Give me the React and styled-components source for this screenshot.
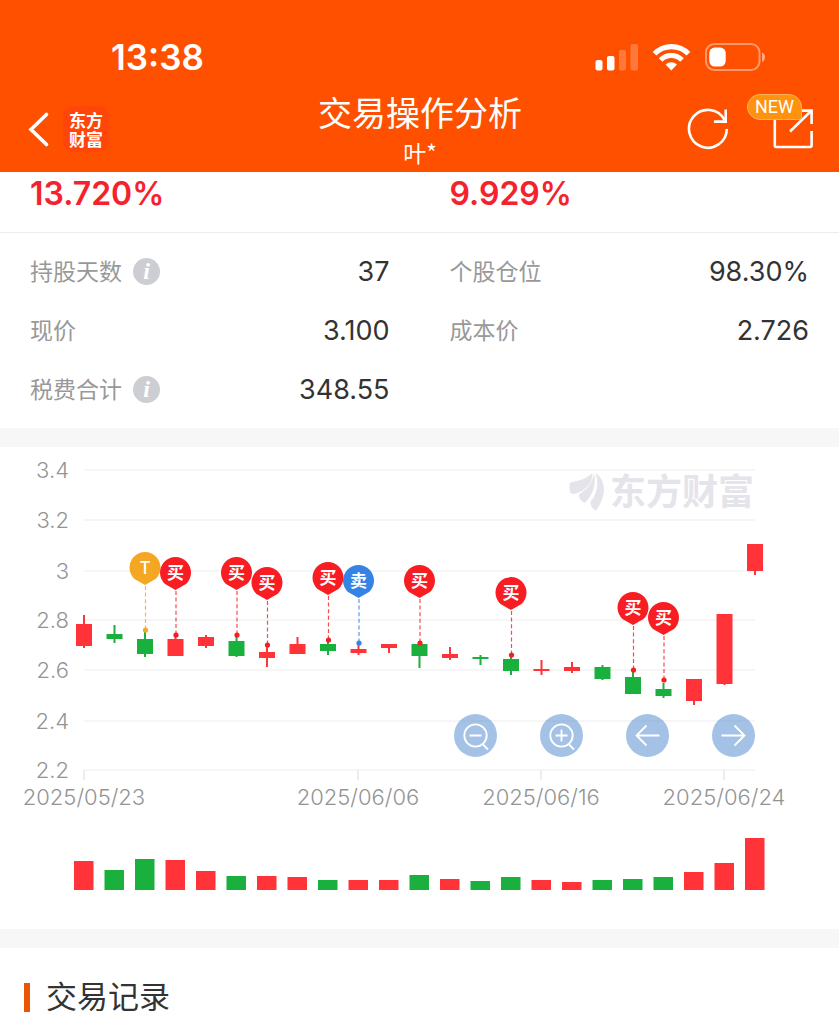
import styled, { createGlobalStyle } from "styled-components";

const RED = "#ff3338";
const GREEN = "#1ab03e";

const xAt = (i) => 84 + i * 30.5;

// [color, body top, body bottom, wick top, wick bottom]
const candles = [
  [RED, 624, 646, 615, 648],
  [GREEN, 634, 639, 625, 643],
  [GREEN, 639, 654, 632, 657],
  [RED, 639, 656, 636, 656],
  [RED, 637, 646, 635, 648],
  [GREEN, 641, 656, 637, 657],
  [RED, 652, 658, 645, 667],
  [RED, 644, 654, 637, 654],
  [GREEN, 644, 651, 642, 655],
  [RED, 649, 653, 645, 655],
  [RED, 644, 648, 644, 653],
  [GREEN, 644, 656, 642, 668],
  [RED, 654, 658, 647, 660],
  [GREEN, 657, 659, 655, 665],
  [GREEN, 659, 671, 656, 675],
  [RED, 669, 671, 660, 675],
  [RED, 667, 671, 662, 673],
  [GREEN, 667, 679, 665, 680],
  [GREEN, 677, 694, 672, 694],
  [GREEN, 689, 696, 683, 698],
  [RED, 679, 701, 679, 705],
  [RED, 614, 684, 614, 685],
  [RED, 544, 571, 544, 575],
];

const volumes = [
  29, 20, 31, 30, 19, 14, 14, 13, 10, 10, 10, 15, 11, 9, 13, 10, 8, 10, 11, 13,
  18, 27, 52,
];

const pins = [
  { i: 2, y: 630, type: "T" },
  { i: 3, y: 635, type: "买" },
  { i: 5, y: 635, type: "买" },
  { i: 6, y: 645, type: "买" },
  { i: 8, y: 640, type: "买" },
  { i: 9, y: 643, type: "卖" },
  { i: 11, y: 643, type: "买" },
  { i: 14, y: 655, type: "买" },
  { i: 18, y: 670, type: "买" },
  { i: 19, y: 680, type: "买" },
];

const pinColors = { T: "#f5a623", 买: "#f81d22", 卖: "#3583e4" };

const yTicks = [
  ["3.4", 470],
  ["3.2", 520],
  ["3", 571],
  ["2.8", 620],
  ["2.6", 670],
  ["2.4", 721],
  ["2.2", 770],
];

const xTicks = [
  ["2025/05/23", 84],
  ["2025/06/06", 358],
  ["2025/06/16", 541],
  ["2025/06/24", 724],
];

const details = [
  { label: "持股天数", value: "37", info: true },
  { label: "个股仓位", value: "98.30%" },
  { label: "现价", value: "3.100" },
  { label: "成本价", value: "2.726" },
  { label: "税费合计", value: "348.55", info: true },
];

const StatusIcons = () => (
  <svg width="170" height="28" viewBox="595 42 170 28" fill="#fff">
    <rect x="595.5" y="59" width="7" height="10.5" rx="2" />
    <rect x="607" y="55" width="7.5" height="14.5" rx="2" />
    <rect x="619" y="49" width="7" height="20.5" rx="2" opacity="0.24" />
    <rect x="630.5" y="43" width="7.5" height="26.5" rx="2" opacity="0.24" />
    <g fill="none" stroke="#fff" strokeWidth="5.2">
      <path d="M654.6 52.8 A23.4 23.4 0 0 1 688.4 52.8" />
      <path d="M660.6 59 A15 15 0 0 1 682 59" />
    </g>
    <path d="M665.6 63.6 A8.4 8.4 0 0 1 677 63.6 L671.3 69.6 Z" />
    <rect
      x="706"
      y="43"
      width="53.5"
      height="26"
      rx="8.5"
      fill="none"
      stroke="#fff"
      strokeWidth="2"
      opacity="0.42"
    />
    <rect x="709.3" y="46.6" width="16.4" height="19" rx="5.5" />
    <path d="M762 51.5 Q765 53 765 56 Q765 59.5 762 61 Z" opacity="0.5" />
  </svg>
);

const BackIcon = () => (
  <svg width="22" height="38" viewBox="28 110 22 38" fill="none">
    <path
      d="M46.5 114.5 L31 129.5 L46.5 144.5"
      stroke="#fff"
      strokeWidth="3.6"
      strokeLinecap="round"
    />
  </svg>
);

const RefreshIcon = () => (
  <svg width="42" height="42" viewBox="687 108 42 42" fill="none">
    <g stroke="#fff" strokeWidth="2.6">
      <path d="M726.8 129 A18.9 18.9 0 1 1 724.5 119.8" />
      <path d="M725.7 109.5 V121.6 H714" />
    </g>
  </svg>
);

const ShareIcon = () => (
  <svg width="42" height="42" viewBox="772 108 42 42" fill="none">
    <g stroke="#fff" strokeWidth="2.6">
      <path d="M774.8 116 V145.5 Q774.8 147 776.3 147 H810 Q811.6 147 811.6 145.5 V131" />
      <path d="M798 110.6 H811.6 V124" />
      <path d="M790 131.5 L811 111" />
    </g>
  </svg>
);

const Pin = ({ x, y, type }) => (
  <g fill={pinColors[type]}>
    <line
      x1={x + 0.5}
      x2={x + 0.5}
      y1={y - 44}
      y2={y}
      stroke={pinColors[type]}
      strokeWidth="1.2"
      strokeDasharray="4 2.6"
      opacity="0.8"
    />
    <circle cx={x + 0.5} cy={y} r="2.6" />
    <path
      d={`M${x} ${y - 45} L${x - 10.5} ${y - 51} A15.5 15.5 0 1 1 ${x + 10.5} ${y - 51} Z`}
    />
    <PinText x={x} y={y - 56} $latin={type === "T"}>
      {type}
    </PinText>
  </g>
);

const Chart = () => (
  <ChartSvg viewBox="0 447 839 482" role="img" aria-label="K线图">
    {yTicks.map(([label, y]) => (
      <g key={label}>
        <line x1="84" x2="755" y1={y} y2={y} stroke="#f3f3f3" strokeWidth="1.4" />
        <AxisText x="69" y={y + 8} textAnchor="end">
          {label}
        </AxisText>
      </g>
    ))}
    {xTicks.map(([label, x]) => (
      <g key={label}>
        <line x1={x} x2={x} y1="770" y2="780" stroke="#e6e6e6" strokeWidth="1.4" />
        <AxisText x={x} y="805" textAnchor="middle">
          {label}
        </AxisText>
      </g>
    ))}

    <g fill="#e4e4ea">
      <path d="M570 482.5 C578 481.5 586 478.5 592.5 473 C592.5 484 585 491 574 494 L570.3 493 C569.3 489 569.3 486 570 482.5 Z" />
      <path d="M579 494.5 C588 489 592.5 482 594 473 C597 484 592 497 584.5 503 C580.5 500.5 578.5 497.5 579 494.5 Z" />
      <path d="M595.5 473 C603 478 605.5 488 603 496 C601.5 502 599 507 595.7 510.5 C592 508 590.5 505.5 590.3 502 C597.5 493 599 484 595.5 473 Z" />
      <Watermark x="610" y="505">
        东方财富
      </Watermark>
    </g>

    {candles.map(([color, top, bottom, high, low], i) => (
      <g key={i} fill={color}>
        <rect x={xAt(i) - 8} y={top} width="16" height={bottom - top} />
        <rect x={xAt(i) - 1} y={high} width="2" height={low - high} />
      </g>
    ))}
    {pins.map((p) => (
      <Pin key={p.i} x={xAt(p.i)} y={p.y} type={p.type} />
    ))}
    {volumes.map((v, i) => (
      <rect
        key={i}
        x={xAt(i) - 10}
        y={890 - v}
        width="19.5"
        height={v}
        fill={candles[i][0]}
      />
    ))}
  </ChartSvg>
);

const tools = [
  { label: "缩小", d: "M-6 0 H6 M7 8.5 L12.5 14", lens: true },
  { label: "放大", d: "M-6 0 H6 M0 -6 V6 M7 8.5 L12.5 14", lens: true },
  { label: "左移", d: "M12 0 H-11 M-1 -10 L-11 0 L-1 10" },
  { label: "右移", d: "M-12 0 H11 M1 -10 L11 0 L1 10" },
];

const App = () => {
  return (
    <>
      <GlobalStyle />
      <Header>
        <StatusBar>
          <Time>13:38</Time>
          <StatusIcons />
        </StatusBar>
        <NavBar>
          <NavSide>
            <IconBtn aria-label="返回">
              <BackIcon />
            </IconBtn>
            <AppLogo>东方财富</AppLogo>
          </NavSide>
          <Heading>
            <Title>交易操作分析</Title>
            <SubTitle>叶*</SubTitle>
          </Heading>
          <NavSide $end>
            <IconBtn aria-label="刷新">
              <RefreshIcon />
            </IconBtn>
            <IconBtn aria-label="分享">
              <ShareIcon />
              <Badge>NEW</Badge>
            </IconBtn>
          </NavSide>
        </NavBar>
      </Header>
      <main>
        <Summary>
          <Rate>13.720%</Rate>
          <Rate>9.929%</Rate>
        </Summary>
        <Details>
          {details.map((d) => (
            <Row key={d.label}>
              <Label>
                {d.label}
                {d.info && <InfoBtn aria-label={`${d.label}说明`}>i</InfoBtn>}
              </Label>
              <Value>{d.value}</Value>
            </Row>
          ))}
        </Details>
        <Divider />
        <ChartPanel>
          <Chart />
          <Tools>
            {tools.map((t) => (
              <ToolBtn key={t.label} aria-label={t.label}>
                <svg width="43" height="43" viewBox="-21.5 -21.5 43 43">
                  <g fill="none" stroke="#fff" strokeWidth="1.8">
                    {t.lens && <circle r="11.2" />}
                    <path d={t.d} />
                  </g>
                </svg>
              </ToolBtn>
            ))}
          </Tools>
        </ChartPanel>
        <Divider />
        <Records>
          <Marker />
          <RecordsTitle>交易记录</RecordsTitle>
        </Records>
      </main>
    </>
  );
};

const GlobalStyle = createGlobalStyle`
  * {
    box-sizing: border-box;
  }
  body {
    margin: 0;
    background: #fff;
    color: #333;
    font-family: Inter, "Noto Sans CJK SC", sans-serif;
  }
  button {
    padding: 0;
    border: none;
    background: none;
    color: inherit;
    font-family: inherit;
    cursor: pointer;
  }
`;

const Header = styled.header`
  background: #ff5000;
  color: #fff;
`;

const StatusBar = styled.div`
  display: flex;
  align-items: center;
  justify-content: space-between;
  height: 86px;
  padding: 27px 74px 0 111px;
`;

const Time = styled.span`
  font-size: 35px;
  font-weight: 600;
  line-height: 44px;
`;

const NavBar = styled.div`
  display: grid;
  grid-template-columns: 1fr auto 1fr;
  align-items: center;
  height: 86px;
  padding: 0 27px 0 28px;
`;

const NavSide = styled.div`
  display: flex;
  align-items: center;
  justify-content: ${({ $end }) => ($end ? "flex-end" : "flex-start")};
  gap: ${({ $end }) => ($end ? "43px" : "13px")};
  margin-right: ${({ $end }) => ($end ? "-2px" : "0")};
`;

const IconBtn = styled.button`
  position: relative;
  display: flex;
`;

const AppLogo = styled.span`
  width: 46px;
  padding: 4px 6px;
  border-radius: 10px;
  background: #ff460a;
  font-family: "Noto Sans CJK SC", sans-serif;
  font-size: 17px;
  font-weight: 700;
  line-height: 19px;
`;

const Badge = styled.span`
  position: absolute;
  right: 12px;
  bottom: 30px;
  width: 55px;
  border: 1px solid #ffb05c;
  border-radius: 13px 13px 3px 13px;
  background: #ff930f;
  font-family: Roboto, sans-serif;
  font-size: 18px;
  line-height: 24px;
  text-align: center;
`;

const Heading = styled.div`
  font-family: "Noto Sans CJK SC", sans-serif;
  text-align: center;
`;

const Title = styled.h1`
  margin: 0;
  font-size: 34px;
  font-weight: 400;
  line-height: 46px;
`;

const SubTitle = styled.div`
  font-size: 23px;
  line-height: 34px;
`;

const Summary = styled.section`
  display: grid;
  grid-template-columns: 1fr 1fr;
  column-gap: 60px;
  padding: 0 30px 16px;
  border-bottom: 1px solid #ececec;
`;

const Rate = styled.div`
  color: #f5222d;
  font-size: 32px;
  font-weight: 600;
  line-height: 44px;
`;

const Details = styled.section`
  display: grid;
  grid-template-columns: 1fr 1fr;
  column-gap: 60px;
  padding: 9px 30px;
`;

const Row = styled.div`
  display: flex;
  align-items: center;
  justify-content: space-between;
  height: 59px;
`;

const Label = styled.span`
  display: flex;
  align-items: center;
  gap: 11px;
  color: #999;
  font-size: 23px;
  line-height: 34px;
`;

const InfoBtn = styled.button`
  width: 27px;
  height: 27px;
  border-radius: 50%;
  && {
    background: #cdced3;
    color: #fff;
    font-family: "Liberation Serif", serif;
  }
  font-size: 24px;
  font-style: italic;
  font-weight: 700;
  line-height: 27px;
`;

const Value = styled.span`
  font-size: 27px;
`;

const Divider = styled.div`
  height: 19px;
  background: #f7f7f7;
`;

const ChartPanel = styled.section`
  position: relative;
`;

const ChartSvg = styled.svg`
  display: block;
  width: 100%;
`;

const AxisText = styled.text`
  fill: #949494;
  font-size: 22px;
  font-weight: 300;
`;

const Watermark = styled.text`
  font-family: "Noto Sans CJK SC", sans-serif;
  font-size: 36px;
  font-weight: 700;
`;

const PinText = styled.text`
  fill: #fff;
  font-size: 17px;
  font-weight: ${({ $latin }) => ($latin ? 500 : 700)};
  text-anchor: middle;
`;

const Tools = styled.div`
  position: absolute;
  top: 55.4%;
  right: 10%;
  display: flex;
  gap: 43px;
`;

const ToolBtn = styled.button`
  display: flex;
  border-radius: 50%;
  && {
    background: rgba(74, 134, 205, 0.5);
  }
`;

const Records = styled.section`
  display: flex;
  align-items: center;
  gap: 16px;
  padding: 27px 24px 0;
`;

const Marker = styled.span`
  width: 6px;
  height: 29px;
  background: #ea5504;
`;

const RecordsTitle = styled.h2`
  margin: 0;
  font-size: 31px;
  font-weight: 400;
  line-height: 44px;
`;

export default App;
